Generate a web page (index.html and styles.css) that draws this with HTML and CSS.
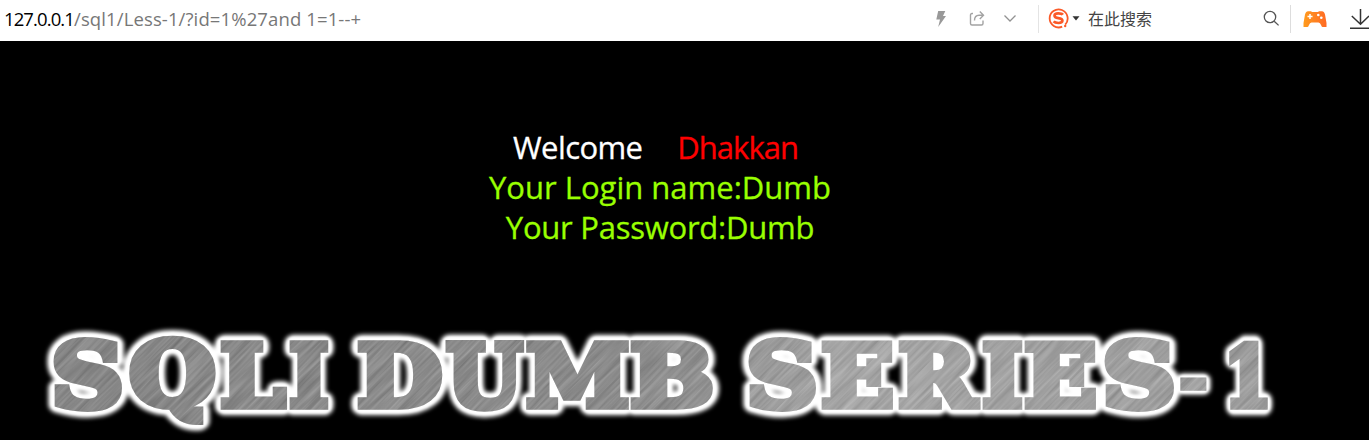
FILE: index.html
```html
<!DOCTYPE html>
<html lang="en">
<head>
<meta charset="utf-8">
<title>Less-1</title>
<link rel="stylesheet" href="styles.css">
</head>
<body>
<header class="toolbar">
  <div class="address"><span class="host">127.0.0.1</span><span class="path">/sql1/Less-1/?id=1%27and 1=1--+</span></div>
  <div class="actions">
    <svg class="bolt" width="12" height="18" viewBox="0 0 12 18"><path d="M3.2 1H10.3L8 6H11L3.2 17 5 9.6H1.3Z" fill="#999"/></svg>
    <svg class="share" width="17" height="17" viewBox="0 0 17 17" fill="none" stroke="#a3a3a3" stroke-width="1.4"><path d="M4 3.5H3Q1.5 3.5 1.5 5V13.5Q1.5 15 3 15H12.5Q14 15 14 13.5V10.5"/><path d="M5.5 10.5Q5.5 5.2 10 5.2H14M10.8 1.5 14.5 5.2 10.8 9"/></svg>
    <svg class="chevron" width="14" height="9" viewBox="0 0 14 9" fill="none" stroke="#929292" stroke-width="1.3"><path d="M1.5 1.5 7 7 12.5 1.5"/></svg>
  </div>
  <div class="search">
    <svg width="21" height="21" viewBox="0 0 21 21" fill="none"><path d="M17.2 16.6A9 9 0 1 0 14.2 18.7" stroke="#fb5a28" stroke-width="1.8"/><path d="M14.8 6.8Q13.8 5.4 10.3 5.4 6.5 5.4 6.5 7.8 6.5 9.6 10.3 10.1 14.4 10.6 14.4 12.6 14.4 15 10.5 15 6.9 15 5.6 13.4" stroke="#fb5a28" stroke-width="2.7"/><circle cx="17.2" cy="18" r="1.2" fill="#fb5a28"/></svg>
    <svg class="caret" width="8" height="5" viewBox="0 0 8 5"><path d="M.5.3H7.5L4 4.5Z" fill="#333"/></svg>
    <span class="hint" lang="zh">在此搜索</span>
    <svg class="lens" width="17" height="17" viewBox="0 0 17 17" fill="none" stroke="#555" stroke-width="1.3"><circle cx="7" cy="7" r="5.7"/><path d="M11.2 11.2 15.6 15.4"/></svg>
  </div>
  <div class="tools">
    <svg width="24" height="18" viewBox="0 0 24 18"><defs><linearGradient id="pad"><stop stop-color="#ff9b1e"/><stop offset="1" stop-color="#ff6a24"/></linearGradient></defs><path d="M5 1.2H8L9 2H15L16 1.2H19Q21 1.2 22 4.5L23.5 13V17H19.5Q18.6 17 18 15 17.2 12.5 15.5 12.5H8.5Q6.8 12.5 6 15 5.4 17 4.5 17H.5V13L2 4.5Q3 1.2 5 1.2Z" fill="url(#pad)"/><path d="M7 4V9M4.5 6.5H9.5" stroke="#fff" stroke-width="1.5"/><circle cx="15.3" cy="5" r="1.3" fill="#fff"/><circle cx="18.3" cy="7.8" r="1.3" fill="#fff"/></svg>
    <svg width="20" height="22" viewBox="0 0 20 22" fill="none" stroke="#333" stroke-width="1.5"><path d="M10.5 1V16M1.8 8 10.5 16.2 19 8M0 20.2H20"/></svg>
  </div>
</header>
<main class="page">
  <div class="message">
    <p class="line welcome"><span>Welcome</span><span class="name">Dhakkan</span></p>
    <p class="line login">Your Login name:Dumb</p>
    <p class="line password">Your Password:Dumb</p>
  </div>
  <svg class="banner" width="1369" height="120" viewBox="0 320 1369 120" role="img" aria-label="SQLI DUMB SERIES-1">
    <defs>
      <g id="title"></g>
      <filter id="soft" x="-5%" y="-30%" width="110%" height="160%"><feGaussianBlur stdDeviation="2.2"/></filter>
      <filter id="smooth" x="-5%" y="-30%" width="110%" height="160%"><feGaussianBlur stdDeviation="1"/></filter>
      <filter id="brushed" x="0" y="0" width="100%" height="100%" color-interpolation-filters="sRGB">
        <feTurbulence type="fractalNoise" baseFrequency="0.016 0.32" numOctaves="3" seed="8"/>
        <feColorMatrix values="0.24 0 0 0 0.45  0.24 0 0 0 0.45  0.24 0 0 0 0.45  0 0 0 0 1"/>
      </filter>
      <linearGradient id="shade"><stop stop-color="#000" stop-opacity=".08"/><stop offset=".4" stop-color="#000" stop-opacity=".04"/><stop offset=".6" stop-color="#fff" stop-opacity=".18"/><stop offset="1" stop-color="#fff" stop-opacity=".08"/></linearGradient>
      <mask id="face" maskUnits="userSpaceOnUse" x="0" y="320" width="1369" height="120"><use href="#title" class="face"/></mask>
    </defs>
    <use href="#title" class="glow" filter="url(#soft)"/>
    <use href="#title" class="rim" filter="url(#smooth)"/>
    <g mask="url(#face)">
      <g transform="rotate(-45 684 380)"><rect x="0" y="-350" width="1369" height="1460" filter="url(#brushed)"/></g>
      <rect x="0" y="320" width="1369" height="120" fill="url(#shade)"/>
    </g>
  </svg>
</main>
<script src="banner.js"></script>
</body>
</html>
```
FILE: styles.css
```css
body { margin: 0; background: #000; overflow: hidden; }
.toolbar { display: flex; align-items: center; box-sizing: border-box; height: 41px; padding-bottom: 4px; background: #fff; font-family: "Open Sans", "Noto Sans", sans-serif; }
.address { flex: 1; padding-left: 4px; font-size: 18.5px; line-height: 26px; letter-spacing: 0.12px; white-space: pre; color: #777; }
.host { display: inline-block; width: 70px; color: #000; letter-spacing: -0.9px; }
.actions { display: flex; align-items: center; width: 103px; height: 28px; border-right: 1px solid #e4e4e4; }
.share { margin-left: 22px; }
.chevron { margin-left: 17px; }
.search { display: flex; align-items: center; width: 251px; height: 28px; border-right: 1px solid #ddd; }
.search > svg:first-child { margin-left: 9px; }
.caret { margin-left: 3px; }
.hint { flex: 1; margin-left: 8px; padding-bottom: 2px; font: 16px/24px "Noto Sans CJK SC", sans-serif; color: #444; }
.lens { margin-right: 10px; }
.tools { display: flex; align-items: center; gap: 23px; width: 78px; box-sizing: border-box; overflow: hidden; }
.tools svg { flex: none; }
.tools svg:first-child { margin-left: 12px; }
.page { display: flex; flex-direction: column; justify-content: space-between; height: 399px; }
.message { display: flex; flex-direction: column; width: 1320px; padding-top: 86px; font: 31px/40px "Open Sans", "Noto Sans", sans-serif; -webkit-text-stroke: 0.3px; }
.line { display: flex; justify-content: center; margin: 0; color: #99ff00; white-space: pre; }
.welcome { gap: 35px; padding-right: 9px; color: #fff; letter-spacing: -0.6px; }
.name { color: #f00; letter-spacing: -1px; }
.password { letter-spacing: -0.25px; }
.banner { display: block; flex: none; }
.letter { font: bold 100px "DejaVu Serif", serif; }
.glow { fill: #fff; stroke: #fff; stroke-width: 22px; stroke-linejoin: round; }
.rim { fill: #fff; stroke: #fff; stroke-width: 16px; stroke-linejoin: round; }
.face { fill: #fff; stroke: #fff; stroke-width: 9px; }
```
FILE: banner.js
```js
// Each glyph with the box its metal face fills: left, top, right, bottom.
const letters = [
  ["S", 53, 338, 123, 412], ["Q", 129, 336, 216, 425], ["L", 220, 341, 288, 410], ["I", 289, 341, 329, 410],
  ["D", 357, 341, 443, 410], ["U", 445, 341, 525, 412], ["M", 526, 341, 629, 410], ["B", 630, 341, 713, 410],
  ["S", 748, 338, 817, 412], ["E", 821, 341, 894, 410], ["R", 898, 341, 981, 410], ["I", 982, 341, 1023, 410],
  ["E", 1024, 341, 1097, 410], ["S", 1104, 338, 1175, 412], ["-", 1180, 377, 1207, 391], ["1", 1229, 341, 1268, 410]
];
const edge = 4.6;
const pen = document.createElement("canvas").getContext("2d");
pen.font = 'bold 100px "DejaVu Serif", serif';
const title = document.getElementById("title");
for (const [glyph, left, top, right, bottom] of letters) {
  const m = pen.measureText(glyph);
  const w = m.actualBoundingBoxRight + m.actualBoundingBoxLeft;
  const h = m.actualBoundingBoxAscent + m.actualBoundingBoxDescent;
  const sx = (right - left) / (w + 2 * edge);
  const sy = (bottom - top) / (h + 2 * edge);
  const text = document.createElementNS("http://www.w3.org/2000/svg", "text");
  const x = left + (m.actualBoundingBoxLeft + edge) * sx;
  const y = top + (m.actualBoundingBoxAscent + edge) * sy;
  text.setAttribute("class", "letter");
  text.setAttribute("transform", `translate(${x} ${y}) scale(${sx} ${sy})`);
  text.textContent = glyph;
  title.append(text);
}
```
